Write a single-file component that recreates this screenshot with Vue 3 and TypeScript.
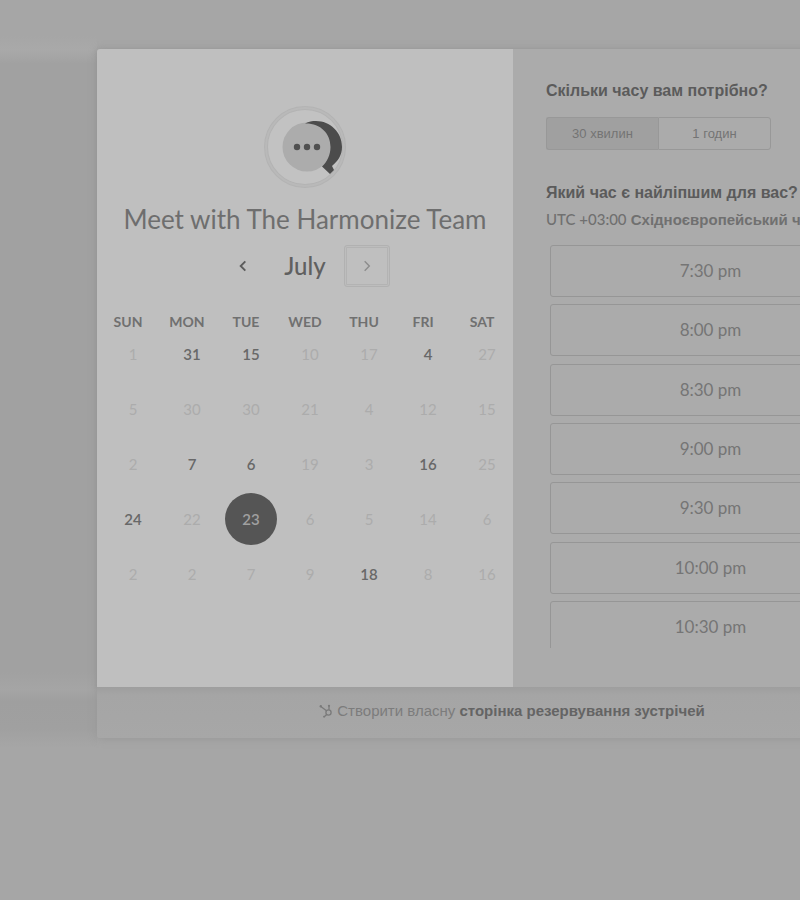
<script setup lang="ts">
import { ref } from 'vue'

interface Day {
  n: number
  open?: boolean
}

const weekdays: string[] = ['SUN', 'MON', 'TUE', 'WED', 'THU', 'FRI', 'SAT']

const off = (n: number): Day => ({ n })
const on = (n: number): Day => ({ n, open: true })

const weeks: Day[][] = [
  [off(1), on(31), on(15), off(10), off(17), on(4), off(27)],
  [off(5), off(30), off(30), off(21), off(4), off(12), off(15)],
  [off(2), on(7), on(6), off(19), off(3), on(16), off(25)],
  [on(24), off(22), on(23), off(6), off(5), off(14), off(6)],
  [off(2), off(2), off(7), off(9), on(18), off(8), off(16)],
]

const durations: string[] = ['30 хвилин', '1 годин']
const slots: string[] = ['7:30 pm', '8:00 pm', '8:30 pm', '9:00 pm', '9:30 pm', '10:00 pm', '10:30 pm']

const selectedDay = ref<number>(23)
const duration = ref<string>(durations[0])
</script>

<template>
  <div class="page">
    <main class="widget">
      <div class="panels">
        <section class="calendar">
          <svg class="logo" viewBox="0 0 84 84" aria-hidden="true">
            <circle cx="42" cy="42" r="39" fill="#c2c2c2" stroke="#b3b3b3" stroke-width="4" />
            <circle cx="42" cy="42" r="39" fill="none" stroke="#b9b9b9" stroke-width="2" />
            <circle cx="44" cy="42" r="24.5" fill="#acacac" />
            <path
              d="M42 18.500C46 16.500 49 16 53 16C67 16 79 27 79 42C79 50 75 56 69 61L71 65L67 69L59 61.500C64 57 67.500 50 67.500 42C67.500 28 57 18 42 18.500Z"
              fill="#4c4c4c"
            />
            <circle cx="34" cy="42" r="3.200" fill="#505050" />
            <circle cx="44" cy="42" r="3.200" fill="#505050" />
            <circle cx="54" cy="42" r="3.200" fill="#505050" />
          </svg>
          <h1>Meet with The Harmonize Team</h1>
          <div class="month">
            <button type="button" class="arrow" aria-label="Previous month">
              <svg viewBox="0 0 10 12"><path d="M7 2L3 6L7 10" /></svg>
            </button>
            <h2>July</h2>
            <button type="button" class="arrow next" aria-label="Next month">
              <svg viewBox="0 0 10 12"><path d="M3 2L7 6L3 10" /></svg>
            </button>
          </div>
          <table>
            <thead>
              <tr>
                <th v-for="name in weekdays" :key="name" scope="col">{{ name }}</th>
              </tr>
            </thead>
            <tbody>
              <tr v-for="(week, w) in weeks" :key="w">
                <td v-for="(day, d) in week" :key="d">
                  <button
                    type="button"
                    class="day"
                    :class="{ open: day.open, selected: day.n === selectedDay }"
                    :disabled="!day.open"
                    @click="selectedDay = day.n"
                  >{{ day.n }}</button>
                </td>
              </tr>
            </tbody>
          </table>
        </section>

        <section class="times">
          <h3>Скільки часу вам потрібно?</h3>
          <div class="durations">
            <button
              v-for="item in durations"
              :key="item"
              type="button"
              :class="{ active: item === duration }"
              @click="duration = item"
            >{{ item }}</button>
          </div>
          <h3>Який час є найліпшим для вас?</h3>
          <p class="zone"><span>UTC +03:00</span> Східноєвропейський час</p>
          <div class="scroll">
            <div class="slots">
              <button v-for="slot in slots" :key="slot" type="button">{{ slot }}</button>
            </div>
          </div>
        </section>
      </div>
      <footer>
        <svg viewBox="0 0 14 14" aria-hidden="true">
          <circle cx="9.500" cy="8.500" r="2.600" />
          <path d="M10 5.800V2M7.500 6.800L1.500 2.200M7.700 10.500L5 13" />
          <circle class="dot" cx="1.800" cy="2.200" r="1.200" />
          <circle class="dot" cx="10" cy="1.800" r="1.100" />
          <circle class="dot" cx="5" cy="12.700" r="0.900" />
        </svg>
        <a href="#">Створити власну <b>сторінка резервування зустрічей</b></a>
      </footer>
    </main>
  </div>
</template>

<style>
body {
  background: #a6a6a6;
}
</style>

<style scoped>
.page {
  box-sizing: border-box;
  min-height: 100vh;
  overflow: hidden;
  padding: 49px 0 48px 97px;
  font-family: "Liberation Sans", Arial, sans-serif;
  color: #606060;
  background:
    linear-gradient(#a6a6a6 36px, #a9a9a9 50px, #a1a1a1 64px, #a1a1a1 672px, #a5a5a5 690px, #9f9f9f 702px, #a0a0a0 728px, #a6a6a6 748px) no-repeat 0 0 / 97px 100%,
    #a6a6a6;
}

button {
  margin: 0;
  padding: 0;
  border: 0;
  background: none;
  color: inherit;
  font: inherit;
}

h1,
h2,
h3,
p {
  margin: 0;
}

.widget {
  min-width: 830px;
  border-radius: 3px;
  box-shadow: 0 1px 8px #989898;
  background: #a6a6a6;
}

.panels {
  display: grid;
  grid-template-columns: 1fr 1fr;
  border-radius: 3px 3px 0 0;
  box-shadow: 0 1px 5px #969696;
}

.calendar {
  box-sizing: border-box;
  display: flex;
  flex-direction: column;
  align-items: center;
  min-height: 638px;
  padding-top: 56px;
  border-radius: 3px 0 0 0;
  background: #bfbfbf;
  font-family: Lato, sans-serif;
}

.logo {
  width: 84px;
  height: 84px;
}

h1 {
  margin-top: 14px;
  font-size: 26px;
  line-height: 32px;
  font-weight: 400;
  color: #6e6e6e;
  white-space: nowrap;
}

.month {
  display: flex;
  align-items: center;
  gap: 18px;
  margin-top: 10px;
}

h2 {
  font-size: 24px;
  line-height: 32px;
  font-weight: 500;
  color: #606060;
}

.arrow {
  box-sizing: border-box;
  display: flex;
  align-items: center;
  justify-content: center;
  width: 46px;
  height: 42px;
}

.arrow svg {
  width: 12px;
  height: 14px;
  fill: none;
  stroke: #5c5c5c;
  stroke-width: 1.600;
}

.next {
  border: 1px solid #b1b1b1;
  border-radius: 3px;
  box-shadow: inset 0 0 0 1px #bdbdbd, inset 0 0 0 2px #b3b3b3;
}

.next svg {
  stroke: #8c8c8c;
  stroke-width: 1.200;
}

table {
  align-self: stretch;
  margin: 24px 0 0 3px;
  border-collapse: collapse;
  table-layout: fixed;
}

th {
  height: 22px;
  padding: 0 3px 0 0;
  font-size: 14px;
  line-height: 22px;
  font-weight: 700;
  color: #707070;
}

td {
  height: 55px;
  padding: 0 0 0 7px;
  text-align: center;
  vertical-align: middle;
}

tbody {
  position: relative;
  top: -7px;
}

.day {
  display: block;
  width: 52px;
  height: 52px;
  margin: 0 auto;
  border-radius: 50%;
  font-size: 15px;
  color: #acacac;
}

.day.open {
  font-weight: 600;
  color: #686868;
}

.day.selected {
  background: #555555;
  color: #a0a0a0;
}

.times {
  box-sizing: border-box;
  padding: 32px 34px 0 33px;
  background: #ababab;
}

h3 {
  font-size: 16px;
  line-height: 20px;
  font-weight: 700;
  color: #5b5b5b;
  white-space: nowrap;
}

.durations {
  display: flex;
  width: 225px;
  margin: 16px 0 33px;
}

.durations button {
  box-sizing: border-box;
  flex: 1;
  height: 33px;
  border: 1px solid #989898;
  border-radius: 0 3px 3px 0;
  font-size: 13px;
  color: #747474;
}

.durations button:first-child {
  border-right: 0;
  border-radius: 3px 0 0 3px;
}

.durations .active {
  background: #a0a0a0;
}

.zone {
  margin-top: 6px;
  font-size: 15px;
  line-height: 20px;
  font-weight: 700;
  color: #707070;
  white-space: nowrap;
}

.zone span {
  font-family: Lato, sans-serif;
  font-weight: 500;
}

.scroll {
  height: 403px;
  margin-top: 15px;
  padding: 0 22px 0 4px;
  overflow: hidden;
}

.slots {
  display: flex;
  flex-direction: column;
  justify-content: space-between;
  height: 408px;
}

.slots button {
  box-sizing: border-box;
  height: 52px;
  padding-bottom: 1px;
  border: 1px solid #969696;
  border-radius: 3px;
  font-family: Lato, sans-serif;
  font-size: 17px;
  color: #757575;
}

footer {
  box-sizing: border-box;
  display: flex;
  align-items: center;
  justify-content: center;
  gap: 4px;
  height: 51px;
  padding-bottom: 4px;
  border-radius: 0 0 3px 3px;
  background: linear-gradient(#9e9e9e, #a5a5a5 8px, #a7a7a7);
  font-size: 15px;
}

footer svg {
  width: 14px;
  height: 14px;
  fill: none;
  stroke: #7a7a7a;
  stroke-width: 1.300;
}

footer .dot {
  fill: #7a7a7a;
  stroke: none;
}

footer a {
  color: #7c7c7c;
  text-decoration: none;
}

footer b {
  color: #646464;
}
</style>
